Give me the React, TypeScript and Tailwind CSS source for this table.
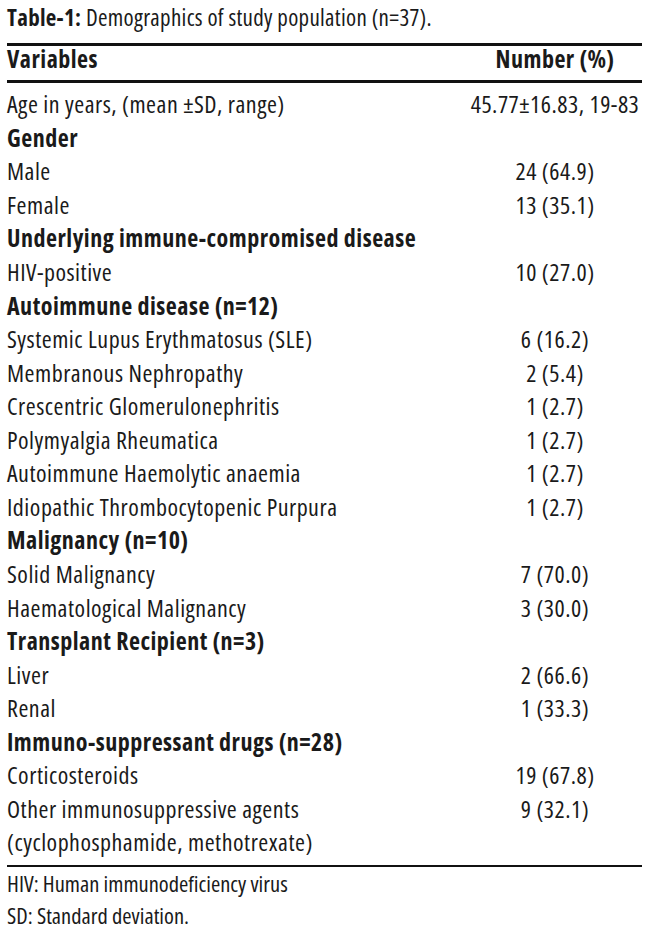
import React from "react";

type Row = { label: string; value?: string; bold?: boolean };

const rows: Row[] = [
  { label: "Age in years, (mean \u00b1SD, range)", value: "45.77\u00b116.83, 19-83" },
  { label: "Gender", bold: true },
  { label: "Male", value: "24 (64.9)" },
  { label: "Female", value: "13 (35.1)" },
  { label: "Underlying immune-compromised disease", bold: true },
  { label: "HIV-positive", value: "10 (27.0)" },
  { label: "Autoimmune disease (n=12)", bold: true },
  { label: "Systemic Lupus Erythmatosus (SLE)", value: "6 (16.2)" },
  { label: "Membranous Nephropathy", value: "2 (5.4)" },
  { label: "Crescentric Glomerulonephritis", value: "1 (2.7)" },
  { label: "Polymyalgia Rheumatica", value: "1 (2.7)" },
  { label: "Autoimmune Haemolytic anaemia", value: "1 (2.7)" },
  { label: "Idiopathic Thrombocytopenic Purpura", value: "1 (2.7)" },
  { label: "Malignancy (n=10)", bold: true },
  { label: "Solid Malignancy", value: "7 (70.0)" },
  { label: "Haematological Malignancy", value: "3 (30.0)" },
  { label: "Transplant Recipient (n=3)", bold: true },
  { label: "Liver", value: "2 (66.6)" },
  { label: "Renal", value: "1 (33.3)" },
  { label: "Immuno-suppressant drugs (n=28)", bold: true },
  { label: "Corticosteroids", value: "19 (67.8)" },
  { label: "Other immunosuppressive agents", value: "9 (32.1)" },
  { label: "(cyclophosphamide, methotrexate)" },
];

export default function App() {
  return (
    <div
      className="w-[650px] h-[934px] bg-white text-[#1a1a1a] text-[24px] tracking-[0.5px] font-stretch-condensed pl-[7px] pr-[8px] overflow-hidden"
      style={{ fontFamily: '"Open Sans", "DejaVu Sans Condensed", sans-serif' }}
    >
      <div className="h-[43px] pt-[1px] text-[23px] tracking-[0.3px] leading-[33.56px] whitespace-nowrap">
        <span className="font-bold">Table-1:</span> Demographics of study population (n=37).
      </div>
      <div className="h-[2.5px] bg-[#111]" />
      <div className="h-[34.5px] flex leading-[26px] font-bold">
        <div className="flex-1">Variables</div>
        <div className="w-[174px] text-center">Number (%)</div>
      </div>
      <div className="h-[2.5px] bg-[#111]" />
      <div className="pt-[4.8px] pb-[5.8px]">
        {rows.map((r, i) => (
          <div key={i} className="h-[33.56px] flex leading-[33.56px] whitespace-nowrap">
            <div className={r.bold ? "flex-1 font-bold" : "flex-1"}>{r.label}</div>
            <div className="w-[174px] text-center">{r.value ?? ""}</div>
          </div>
        ))}
      </div>
      <div className="h-[2.5px] bg-[#111]" />
      <div className="pt-[0.5px] text-[22.5px] tracking-normal leading-[32px]">
        <div>HIV: Human immunodeficiency virus</div>
        <div>SD: Standard deviation.</div>
      </div>
    </div>
  );
}
